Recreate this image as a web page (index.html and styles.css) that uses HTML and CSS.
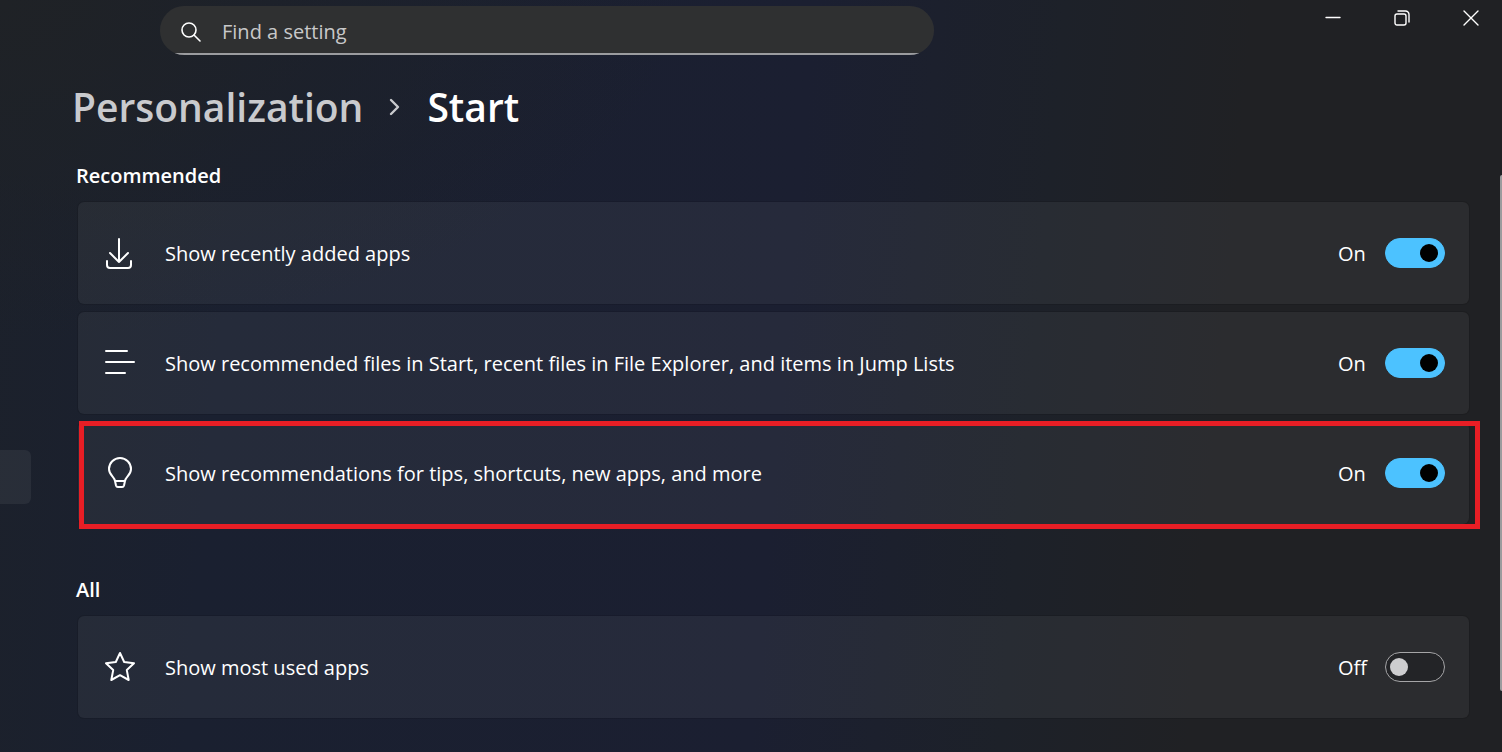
FILE: index.html
```html
<!DOCTYPE html>
<html lang="en">
<head>
    <meta charset="UTF-8">
    <meta name="viewport" content="width=device-width, initial-scale=1.0">
    <title>Settings</title>
    <link rel="stylesheet" href="styles.css">
</head>
<body>

<header class="titlebar">
    <label class="search">
        <svg class="search-icon" viewBox="0 0 20 20" aria-hidden="true"><circle cx="8" cy="8" r="7"/><path d="M13 13l6 6"/></svg>
        <input type="text" placeholder="Find a setting" aria-label="Find a setting">
    </label>
    <div class="window-buttons">
        <button type="button" aria-label="Minimize"><svg viewBox="0 0 16 16"><path d="M1 7.500h14"/></svg></button>
        <button type="button" aria-label="Restore"><svg viewBox="0 0 16 16"><rect x="1" y="4" width="11" height="11" rx="2"/><path d="M4 1h7.500a3.500 3.500 0 0 1 3.500 3.500V12"/></svg></button>
        <button type="button" aria-label="Close"><svg viewBox="0 0 16 16"><path d="M1 1l14 14M15 1L1 15"/></svg></button>
    </div>
</header>

<div class="layout">
    <nav class="sidebar" aria-label="Settings sections">
        <a class="nav-item" href="#" aria-label="Personalization"></a>
    </nav>

    <main class="content">
        <h1 class="breadcrumb">
            <a href="#">Personalization</a>
            <svg class="chevron" viewBox="0 0 12 18" aria-hidden="true"><path d="M2 2l7 7-7 7"/></svg>
            <span>Start</span>
        </h1>

        <section>
            <h2>Recommended</h2>
            <div class="cards">
                <label class="card">
                    <svg class="icon" viewBox="0 0 32 32" aria-hidden="true"><path d="M15 2v23M6 16l9 9 9-9M3 24v4a3 3 0 0 0 3 3h18a3 3 0 0 0 3-3v-4"/></svg>
                    <span class="card-text">Show recently added apps</span>
                    <span class="state">On</span>
                    <input class="toggle" type="checkbox" role="switch" checked>
                </label>
                <label class="card">
                    <svg class="icon" viewBox="0 0 32 32" aria-hidden="true"><path d="M2 4h21M2 15h28M2 26h19"/></svg>
                    <span class="card-text">Show recommended files in Start, recent files in File Explorer, and items in Jump Lists</span>
                    <span class="state">On</span>
                    <input class="toggle" type="checkbox" role="switch" checked>
                </label>
                <label class="card highlighted">
                    <svg class="icon" viewBox="0 0 32 32" aria-hidden="true"><path d="M11 24C10.500 20 5 18 5 12a11 11 0 0 1 22 0c0 6-5.500 8-6 12l-1 4.500a2 2 0 0 1-2 1.500h-4a2 2 0 0 1-2-1.500zM11 24h10"/></svg>
                    <span class="card-text">Show recommendations for tips, shortcuts, new apps, and more</span>
                    <span class="state">On</span>
                    <input class="toggle" type="checkbox" role="switch" checked>
                </label>
            </div>
        </section>

        <section>
            <h2>All</h2>
            <div class="cards">
                <label class="card">
                    <svg class="icon" viewBox="0 0 32 32" aria-hidden="true"><path d="M16 2l4.200 9 9.800 1.300-7.200 6.800 1.900 9.900L16 24.200 7.300 29l1.900-9.900L2 12.300 11.800 11z"/></svg>
                    <span class="card-text">Show most used apps</span>
                    <span class="state">Off</span>
                    <input class="toggle" type="checkbox" role="switch">
                </label>
            </div>
        </section>
    </main>
</div>

<div class="scrollbar"></div>

<script>
    // Keep the On/Off text in step with its switch
    document.querySelectorAll(".toggle").forEach(toggle => {
        toggle.addEventListener("change", () => {
            toggle.previousElementSibling.textContent = toggle.checked ? "On" : "Off";
        });
    });
</script>

</body>
</html>
```

FILE: styles.css
```css
* {
    box-sizing: border-box;
}
body {
    margin: 0;
    min-height: 100vh;
    position: relative;
    font-family: "Open Sans", "Noto Sans", sans-serif;
    font-size: 20px;
    line-height: 28px;
    color: #fff;
    background:
        radial-gradient(ellipse at 0 0, #1f2226 0, rgba(31, 34, 38, 0) 32%),
        linear-gradient(95deg, #1c212b 0, #1a2030 16%, #1b1f31 52%, #1d2129 68%, #202124 80%);
}
svg {
    flex: none;
    fill: none;
    stroke: #fff;
    stroke-linecap: round;
    stroke-linejoin: round;
}
.titlebar {
    display: flex;
    justify-content: space-between;
    align-items: flex-start;
    padding-left: 160px;
}
.search {
    display: flex;
    align-items: center;
    gap: 21px;
    flex: 1;
    max-width: 774px;
    height: 49px;
    margin-top: 6px;
    padding: 2px 21px 0;
    border-radius: 25px;
    background: linear-gradient(to top, #9b9c9f 2px, #2f3031 2px);
}
.search-icon {
    width: 20px;
    height: 20px;
    stroke-width: 1.6;
}
.search input {
    flex: 1;
    min-width: 0;
    padding: 0;
    border: 0;
    outline: 0;
    background: none;
    font: inherit;
    color: #fff;
}
.search input::placeholder {
    color: #c8c8c9;
    opacity: 1;
}
.window-buttons {
    display: flex;
    gap: 7px;
}
.window-buttons button {
    display: flex;
    align-items: center;
    justify-content: center;
    width: 62px;
    height: 36px;
    padding: 0;
    border: 0;
    background: none;
}
.window-buttons svg {
    width: 16px;
    height: 16px;
    stroke-width: 1.4;
}
.layout {
    display: flex;
}
.sidebar {
    width: 31px;
    padding-top: 395px;
}
.nav-item {
    display: block;
    height: 54px;
    border-radius: 0 6px 6px 0;
    background: rgba(255, 255, 255, 0.06);
}
.content {
    flex: 1;
    padding: 24px 33px 32px 47px;
}
.breadcrumb {
    display: flex;
    align-items: center;
    gap: 26px;
    margin: 0 0 27px -6px;
    font-size: 39px;
    line-height: 56px;
    font-weight: 600;
}
.breadcrumb a {
    color: #c9cacd;
    text-decoration: none;
}
.chevron {
    width: 12px;
    height: 18px;
    stroke: #c9cacd;
    stroke-width: 2.4;
}
h2 {
    margin: 0 0 12px -2px;
    font-size: 20px;
    line-height: 28px;
    font-weight: 600;
}
section + section {
    margin-top: 52px;
}
.cards {
    display: flex;
    flex-direction: column;
    gap: 8px;
}
.card {
    display: flex;
    align-items: center;
    position: relative;
    min-height: 102px;
    padding: 0 24px 0 26px;
    border-radius: 6px;
    background: rgba(255, 255, 255, 0.05);
    box-shadow: 0 0 0 1px rgba(0, 0, 0, 0.1);
}
.icon {
    width: 32px;
    height: 32px;
    margin-right: 29px;
    stroke-width: 2;
}
.card-text {
    flex: 1;
    padding-top: 2px;
}
.state {
    width: 47px;
    padding-top: 2px;
}
/* marker frame drawn over the row */
.highlighted::after {
    content: "";
    position: absolute;
    inset: -1px -11px -5px 1px;
    border: 5px solid #e81e25;
    pointer-events: none;
}
.toggle {
    appearance: none;
    display: flex;
    align-items: center;
    width: 60px;
    height: 30px;
    margin: 0;
    padding: 0 4px;
    border: 1px solid #a5a5a7;
    border-radius: 15px;
    background: #232427;
}
.toggle::before {
    content: "";
    width: 18px;
    height: 18px;
    border-radius: 50%;
    background: #cdcdcf;
}
.toggle:checked {
    justify-content: flex-end;
    padding: 0 6px;
    border-color: #4cc2ff;
    background: #4cc2ff;
}
.toggle:checked::before {
    background: #000;
}
.scrollbar {
    position: absolute;
    top: 175px;
    right: 0;
    bottom: 61px;
    width: 2px;
    border-radius: 2px 0 0 2px;
    background: #9b9b9d;
}
```
